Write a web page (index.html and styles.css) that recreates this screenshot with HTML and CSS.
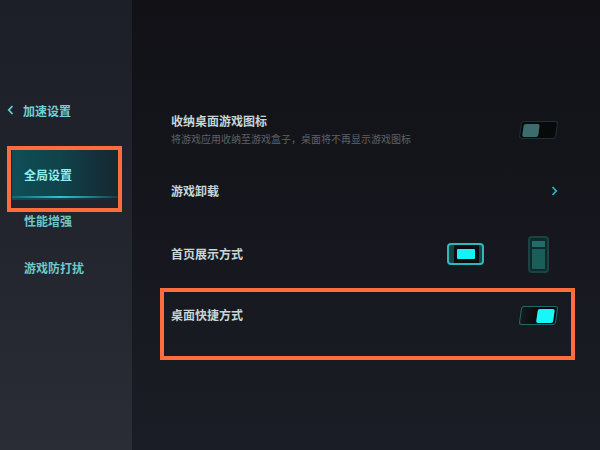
FILE: index.html
```html
<!DOCTYPE html>
<html lang="zh-CN">
<head>
  <meta charset="UTF-8">
  <meta name="viewport" content="width=device-width, initial-scale=1.0">
  <title>加速设置</title>
  <link rel="stylesheet" href="styles.css">
</head>
<body>
  <div class="app">
    <aside class="sidebar">
      <div class="back">
        <svg class="back-icon" width="7" height="10" viewBox="0 0 7 10">
          <path d="M5.5 1 L1.8 5 L5.5 9" fill="none" stroke="#5fd2d6" stroke-width="1.8"/>
        </svg>
        <span>加速设置</span>
      </div>
      <nav class="nav">
        <div class="nav-item active">全局设置</div>
        <div class="nav-item second">性能增强</div>
        <div class="nav-item">游戏防打扰</div>
      </nav>
    </aside>

    <main class="content">
      <div class="row row-first">
        <div class="row-text">
          <div class="row-title">收纳桌面游戏图标</div>
          <div class="row-sub">将游戏应用收纳至游戏盒子，桌面将不再显示游戏图标</div>
        </div>
        <div class="toggle off"><span class="knob"></span></div>
      </div>

      <div class="row row-link">
        <div class="row-title">游戏卸载</div>
        <svg class="chevron" width="7" height="10" viewBox="0 0 7 10">
          <path d="M1.5 1 L5.2 5 L1.5 9" fill="none" stroke="#2ab4bd" stroke-width="1.8"/>
        </svg>
      </div>

      <div class="row row-mode">
        <div class="row-title">首页展示方式</div>
        <div class="modes">
          <div class="mode-h"><span class="mode-h-inner"></span></div>
          <div class="mode-v"><span class="mode-v-top"></span><span class="mode-v-body"></span></div>
        </div>
      </div>

      <div class="marked">
        <div class="row row-shortcut">
          <div class="row-title">桌面快捷方式</div>
          <div class="toggle on"><span class="knob"></span></div>
        </div>
      </div>
    </main>
  </div>
</body>
</html>
```

FILE: styles.css
```css
body {
  margin: 0;
  font-family: "Noto Sans CJK SC", "Noto Sans", sans-serif;
  background-color: #15161c;
}
.app {
  display: flex;
  width: 600px;
  height: 450px;
  overflow: hidden;
}

/* left menu */
.sidebar {
  width: 132px;
  flex-shrink: 0;
  background: linear-gradient(180deg, #1c1f27 0%, #22242d 45%, #2a2c36 100%);
  box-sizing: border-box;
  padding-top: 100px;
}
.back {
  display: flex;
  align-items: center;
  height: 20px;
  padding-left: 7px;
  font-size: 12px;
  color: #6fd3d6;
  font-weight: 600;
}
.back-icon {
  margin-right: 9px;
}
.nav {
  margin-top: 30px;
}
.nav-item {
  margin-top: 27px;
  padding-left: 24px;
  line-height: 20px;
  font-size: 12px;
  font-weight: 600;
  color: #6cc8cb;
}
.nav-item.active {
  position: relative;
  margin: 0 14px 0 12px;
  padding-left: 12px;
  height: 50px;
  line-height: 50px;
  color: #8ff0f2;
  background: linear-gradient(90deg, #0f4e57 0%, #10434b 45%, #14303a 80%, #172730 100%);
}
.nav-item.active::before {
  content: "";
  position: absolute;
  left: 0;
  right: 0;
  bottom: 2px;
  height: 2px;
  background: linear-gradient(90deg, rgba(40, 200, 210, 0.2), #2cc6cf 45%, rgba(40, 200, 210, 0.1));
}
.nav-item.active::after {
  content: "";
  position: absolute;
  left: -5px;
  top: -4px;
  width: 107px;
  height: 58px;
  border: 4px solid #ff6c3d;
}
.nav-item.second {
  margin-top: 11px;
}

/* right panel */
.content {
  flex: 1;
  background: linear-gradient(180deg, #111116 0%, #14151b 35%, #1b1d26 100%);
  padding: 113px 43px 0 39px;
}
.row {
  display: flex;
  align-items: center;
  justify-content: space-between;
}
.row-title {
  font-size: 12px;
  line-height: 16px;
  font-weight: 600;
  color: #c8d6d6;
}
.row-sub {
  margin-top: 3px;
  font-size: 10px;
  line-height: 14px;
  color: #5d6269;
}
.row-link {
  margin-top: 33px;
  height: 24px;
}
.row-mode {
  margin-top: 32px;
  height: 38px;
}
.chevron {
  margin-right: -1px;
}
.modes {
  display: flex;
  align-items: center;
  margin-right: 8px;
}

/* display mode icons */
.mode-h {
  width: 37px;
  height: 22px;
  box-sizing: border-box;
  border: 2px solid #2fb8ba;
  border-radius: 4px;
  background: linear-gradient(90deg, #174347 0 5px, #0b0d10 5px 30px, #174347 30px);
  display: flex;
  align-items: center;
  justify-content: center;
}
.mode-h-inner {
  width: 18px;
  height: 10px;
  background: #16f2f4;
  border-radius: 1px;
}
.mode-v {
  margin-left: 44px;
  width: 21px;
  height: 37px;
  box-sizing: border-box;
  border: 2px solid #1a4344;
  border-radius: 4px;
  background: #0f2a2c;
  padding: 3px 2px 2px;
  display: flex;
  flex-direction: column;
}
.mode-v-top {
  height: 6px;
  background: #1f6c68;
  margin-bottom: 2px;
}
.mode-v-body {
  flex: 1;
  background: #1a5e5a;
}

/* toggles */
.toggle {
  width: 37px;
  height: 18px;
  box-sizing: border-box;
  border-radius: 3px;
  transform: skewX(-8deg);
  display: flex;
  align-items: center;
  padding: 0 2px;
}
.toggle .knob {
  width: 16px;
  height: 13px;
  border-radius: 2px;
}
.toggle.off {
  border: 1px solid #1e3133;
  background: #07090b;
}
.toggle.off .knob {
  background: #3a6d6c;
}
.toggle.on {
  justify-content: flex-end;
  border: 1px solid #1f6a6a;
  background: linear-gradient(90deg, #161a1e, #050607 60%);
  height: 19px;
}
.toggle.on .knob {
  width: 17px;
  height: 14px;
  background: #17f6f8;
}

/* annotated row */
.marked {
  margin: 15px -18px 0 -11px;
  border: 4px solid #ff6c3d;
  padding: 11px 14px 29px 7px;
}
.row-shortcut {
  height: 24px;
}
```
